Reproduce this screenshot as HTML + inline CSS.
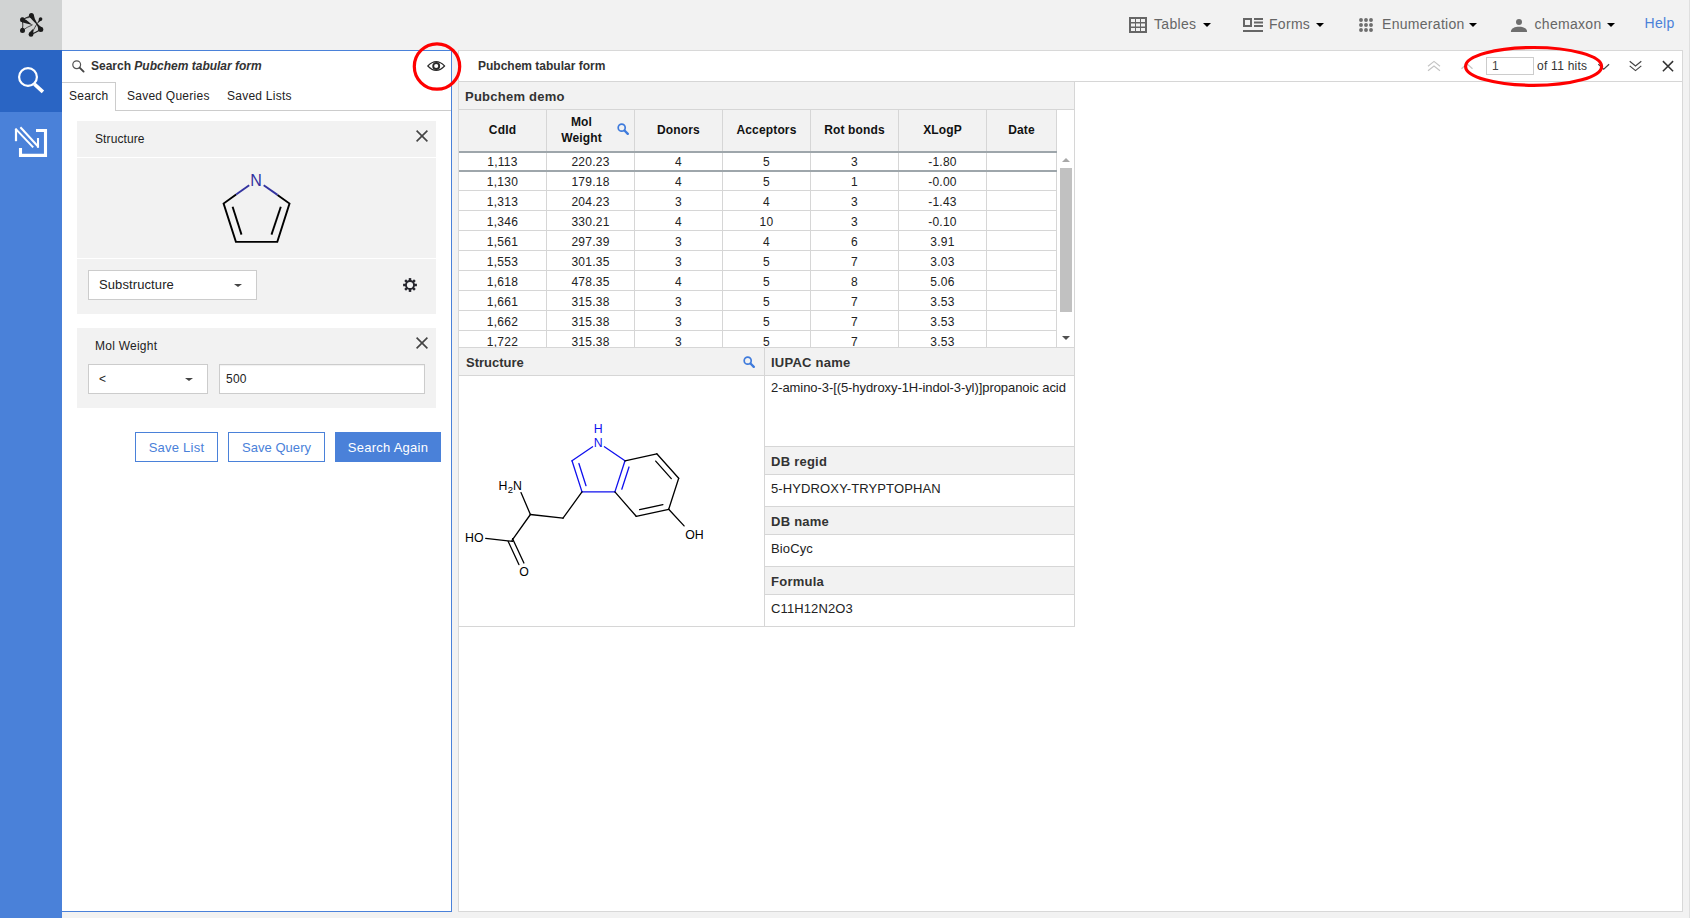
<!DOCTYPE html>
<html>
<head>
<meta charset="utf-8">
<title>Pubchem tabular form</title>
<style>
*{box-sizing:border-box;margin:0;padding:0}
html,body{width:1690px;height:918px;overflow:hidden;background:#f2f2f2;font-family:"Liberation Sans",sans-serif;font-size:12px;color:#222;letter-spacing:0.250px}
.abs{position:absolute}
#sidebar{position:absolute;left:0;top:0;width:62px;height:918px;background:#4a81d9}
#logo{position:absolute;left:0;top:0;width:62px;height:50px;background:#d1d3d3}
#sb-search{position:absolute;left:0;top:50px;width:62px;height:62px;background:#2a65c4}
/* top nav */
.nav{position:absolute;top:0;height:50px;font-size:14px;color:#666;line-height:16px;white-space:nowrap}
.nav span.t{position:absolute;top:16px;letter-spacing:0.300px}
.caret{position:absolute;width:0;height:0;border-left:4px solid transparent;border-right:4px solid transparent;border-top:4px solid #000}
/* left panel */
#lp{position:absolute;left:62px;top:50px;width:390px;height:862px;background:#fff;border:1px solid #4a81d9;border-left:none}
.card{position:absolute;background:#f2f2f2}
.sel{position:absolute;background:#fff;border:1px solid #ccc;font-size:13px;line-height:28px;padding-left:10px;color:#222}
.btn{position:absolute;top:432px;height:30px;border:1px solid #4a81d9;color:#4a81d9;background:#fff;font-size:13px;line-height:29px;text-align:center}
/* right panel */
#rp{position:absolute;left:458px;top:50px;width:1225px;height:862px;background:#fff;border:1px solid #d8d8d8}
.hd{position:absolute;background:#f2f2f2;font-weight:bold;font-size:13px;color:#333;line-height:27px;padding-left:6px;border-bottom:1px solid #d8d8d8}
.val{position:absolute;background:#fff;font-size:12px;color:#222;line-height:16px;padding:5px 0 0 6px;border-bottom:1px solid #d8d8d8}
table{border-collapse:collapse;position:absolute;table-layout:fixed}
td,th{border-right:1px solid #d8d8d8;text-align:center;font-size:12px;color:#222;padding:0;overflow:hidden}
th{background:#f2f2f2;font-weight:bold;color:#111;line-height:16px}
td{border-bottom:1px solid #d8d8d8;height:20px;line-height:19px}
.th{background:#f2f2f2;font-weight:bold;font-size:12px;color:#111;text-align:center;border-right:1px solid #d8d8d8}
.tc{background:#fff;font-size:12px;color:#222;text-align:center;border-right:1px solid #d8d8d8}
.lab{font-weight:bold;font-size:13px;color:#333;line-height:17px;white-space:nowrap}
.thx{letter-spacing:0.150px;font-weight:bold;font-size:12px;color:#111;line-height:16px;text-align:center;white-space:nowrap}
.tcx{font-size:12px;color:#222;line-height:16px;text-align:center;white-space:nowrap}
.vx{font-size:13px;color:#222;line-height:17px;white-space:nowrap;letter-spacing:0.120px}
</style>
</head>
<body>
<!-- top navigation -->
<div class="nav" style="left:0;width:1690px">
  <svg class="abs" style="left:1129px;top:17px" width="18" height="16" viewBox="0 0 18 16"><path fill="#666" fill-rule="evenodd" d="M0 0h18v16H0zM2 2v3h4V2zM7 2v3h4V2zM12 2v3h4V2zM2 6.5v3h4v-3zM7 6.5v3h4v-3zM12 6.5v3h4v-3zM2 11v3h4v-3zM7 11v3h4v-3zM12 11v3h4v-3z"/></svg>
  <span class="t" style="left:1154px">Tables</span><i class="caret" style="left:1203px;top:23px"></i>
  <svg class="abs" style="left:1243px;top:18px" width="20" height="14" viewBox="0 0 20 14"><path fill="#666" fill-rule="evenodd" d="M0 0h9v9H0zM2 2v5h5V2zM11 0h9v2h-9zM11 3.5h9v2h-9zM11 7h9v2h-9zM0 12h20v2H0z"/></svg>
  <span class="t" style="left:1269px">Forms</span><i class="caret" style="left:1316px;top:23px"></i>
  <svg class="abs" style="left:1358px;top:18px" width="16" height="15" viewBox="0 0 16 15"><g fill="#6e6e6e"><circle cx="3" cy="2" r="1.950"/><circle cx="8" cy="2" r="1.950"/><circle cx="13" cy="2" r="1.950"/><circle cx="3" cy="7" r="1.950"/><circle cx="8" cy="7" r="1.950"/><circle cx="13" cy="7" r="1.950"/><circle cx="3" cy="12" r="1.950"/><circle cx="8" cy="12" r="1.950"/><circle cx="13" cy="12" r="1.950"/></g></svg>
  <span class="t" style="left:1382px">Enumeration</span><i class="caret" style="left:1469px;top:23px"></i>
  <svg class="abs" style="left:1510px;top:18px" width="18" height="14" viewBox="0 0 18 14"><g fill="#6e6e6e"><circle cx="9" cy="3.900" r="3"/><path d="M0.900 13.900 C0.900 10 5 8.700 9 8.700 S17.100 10 17.100 13.900z"/></g></svg>
  <span class="t" style="left:1534.500px">chemaxon</span><i class="caret" style="left:1607px;top:23px"></i>
  <span class="t" style="left:1644.500px;top:15px;color:#4a81d9">Help</span>
</div>

<div class="abs" style="left:1689px;top:0;width:1px;height:918px;background:#dfdfdf"></div>
<!-- sidebar -->
<div id="sidebar">
  <div id="logo">
    <svg class="abs" style="left:14px;top:8px" width="36" height="34" viewBox="14 8 36 34">
      <g fill="#1c1c1c">
        <circle cx="31.400" cy="15.600" r="2.500"/><circle cx="40.600" cy="19" r="1.800"/><circle cx="40.800" cy="29.400" r="2.500"/>
        <circle cx="31" cy="34.400" r="2.400"/><circle cx="22.500" cy="30.400" r="2.500"/><circle cx="22.500" cy="19.800" r="2.500"/>
        <path d="M21.500 17.600 Q27 19.500 32.400 25 Q27.500 23.800 22 22.200z"/>
        <path d="M29 16.200 Q32 20 36.500 24.200 L37.300 23.500 Q34.500 19.500 33.800 15z"/>
        <path d="M36.500 24.200 Q38 26.500 38.500 30.600 L43 28 Q40 26.500 37.300 23.500z"/>
        <path d="M41.900 20.200 Q39 21.500 37.600 23.600 L38.300 22.600 Q38.600 20.500 39 18.200z"/>
        <path d="M28.700 33.800 Q30.500 31 33 29 L33.500 33.500z"/>
        <path d="M24.800 29.400 L22.400 27.400 L20.600 29 z"/>
        <path d="M29.200 17.300 L26 17.600 L24.500 18.600 L29.500 18 z"/>
      </g>
      <g fill="none" stroke="#1c1c1c" stroke-linecap="round">
        <path d="M22.500 19.800 Q23.200 25 22.500 30.400" stroke-width="0.900"/>
        <path d="M22.500 30.400 Q27 27 32.200 25" stroke-width="0.700"/>
        <path d="M22.500 19.800 Q26.500 17.200 31.400 15.600" stroke-width="0.900"/>
        <path d="M40.600 19 Q36.500 24 34.800 27.500 Q33 31 31 34.400" stroke-width="0.800"/>
        <path d="M40.800 29.400 Q36 32.200 31 34.400" stroke-width="1.100"/>
      </g>
    </svg>
  </div>
  <div id="sb-search">
    <svg class="abs" style="left:0;top:0" width="62" height="62" viewBox="0 50 62 62">
      <circle cx="28" cy="77" r="8.900" fill="none" stroke="#fff" stroke-width="2.200"/>
      <path d="M34.400 84.200 L42.900 91.800" stroke="#fff" stroke-width="3.600" fill="none"/>
    </svg>
  </div>
  <svg class="abs" style="left:0;top:112px" width="62" height="62" viewBox="0 112 62 62">
    <g fill="none" stroke="#fff">
      <path d="M16 141.200 V128.800" stroke-width="2.200"/>
      <path d="M15.400 128.600 L33.200 147.400" stroke-width="2"/>
      <path d="M20.400 127.300 L38.300 146.800" stroke-width="2"/>
      <path d="M38 138 V147.800" stroke-width="2.100"/>
      <path d="M36 130.500 H45.500 V155.400 H20.500 V148" stroke-width="3.100"/>
    </g>
  </svg>
</div>

<!-- left panel -->
<div id="lp">
  <!-- header -->
  <svg class="abs" style="left:10px;top:9px" width="13" height="13" viewBox="0 0 13 13"><circle cx="4.700" cy="4.700" r="3.900" fill="none" stroke="#555" stroke-width="1.200"/><path d="M7.600 7.600 L11.600 11.600" stroke="#444" stroke-width="1.900" stroke-linecap="round"/></svg>
  <div class="abs" style="left:29px;top:7px;font-size:12px;font-weight:bold;color:#333;line-height:16px;white-space:nowrap;letter-spacing:0">Search <i>Pubchem tabular form</i></div>
  <svg class="abs" style="left:365px;top:9px" width="19" height="12" viewBox="0 0 19 12"><path d="M0.800 6 Q9.200 -2.700 17.600 6 Q9.200 14.700 0.800 6z" fill="none" stroke="#2a2a2a" stroke-width="1.100" stroke-linejoin="miter"/><circle cx="9.200" cy="6" r="3" fill="none" stroke="#2a2a2a" stroke-width="1.900"/></svg>
  <!-- tabs -->
  <div class="abs" style="left:0;top:59px;width:389px;height:1px;background:#ccc"></div>
  <div class="abs" style="left:0;top:31px;width:54px;height:29px;background:#fff;border-top:1px solid #ccc;border-right:1px solid #ccc"></div>
  <div class="abs" style="left:7px;top:37px;line-height:16px;color:#222">Search</div>
  <div class="abs" style="left:65px;top:37px;line-height:16px;color:#222">Saved Queries</div>
  <div class="abs" style="left:165px;top:37px;line-height:16px;color:#222">Saved Lists</div>
  <!-- structure card -->
  <div class="card" style="left:15px;top:70px;width:359px;height:36px"></div>
  <div class="abs" style="left:33px;top:80px;line-height:16px;color:#222;letter-spacing:0.100px">Structure</div>
  <svg class="abs" style="left:353px;top:78px" width="14" height="14" viewBox="0 0 14 14"><path d="M1.600 1.600 L12.400 12.400 M12.400 1.600 L1.600 12.400" stroke="#444" stroke-width="1.600"/></svg>
  <div class="card" style="left:15px;top:107px;width:359px;height:100px"></div>
  <svg class="abs" style="left:140px;top:115px" width="100" height="85" viewBox="202 166 100 85">
    <g fill="none" stroke="#000" stroke-width="1.900" stroke-linecap="butt" stroke-linejoin="miter">
      <path d="M236.100 194.600 L223.600 203.600 L235.900 241.900 L277.300 241.900 L289.500 203.600 L277.500 194.900"/>
      <path d="M232.600 206.800 L241.500 234.600"/>
      <path d="M280.800 206.800 L271.500 234.600"/>
    </g>
    <g fill="none" stroke="#33339f" stroke-width="1.900">
      <path d="M249.200 185.300 L236.100 194.600"/>
      <path d="M263.700 185.300 L277.500 194.900"/>
    </g>
    <text x="256.100" y="185.800" font-family="Liberation Sans, sans-serif" font-size="16" fill="#33339f" text-anchor="middle" letter-spacing="0">N</text>
  </svg>
  <div class="card" style="left:15px;top:208px;width:359px;height:55px"></div>
  <div class="sel" style="left:26px;top:219px;width:169px;height:30px;letter-spacing:0.100px">Substructure<i class="caret" style="left:145px;top:13px;border-width:3.500px 4px 0 4px;border-top-color:#444"></i></div>
  <svg class="abs" style="left:340px;top:226px" width="16" height="16" viewBox="0 0 16 16"><g transform="translate(8 8)"><g fill="#26262e"><rect x="-1.250" y="-6.900" width="2.500" height="13.800"/><rect x="-1.250" y="-6.900" width="2.500" height="13.800" transform="rotate(45)"/><rect x="-1.250" y="-6.900" width="2.500" height="13.800" transform="rotate(90)"/><rect x="-1.250" y="-6.900" width="2.500" height="13.800" transform="rotate(135)"/><circle r="4.900"/></g><circle r="3.100" fill="#f2f2f2"/></g></svg>
  <!-- mol weight card -->
  <div class="card" style="left:15px;top:277px;width:359px;height:80px"></div>
  <div class="abs" style="left:33px;top:287px;line-height:16px;color:#222">Mol Weight</div>
  <svg class="abs" style="left:353px;top:285px" width="14" height="14" viewBox="0 0 14 14"><path d="M1.600 1.600 L12.400 12.400 M12.400 1.600 L1.600 12.400" stroke="#444" stroke-width="1.600"/></svg>
  <div class="sel" style="left:26px;top:313px;width:120px;height:30px;font-size:12px;line-height:29px">&lt;<i class="caret" style="left:96px;top:13px;border-width:3.500px 4px 0 4px;border-top-color:#444"></i></div>
  <div class="sel" style="left:157px;top:313px;width:206px;height:30px;font-size:12px;padding-left:6px;line-height:29px;box-shadow:inset 0 1px 1px rgba(0,0,0,.06)">500</div>
  <!-- buttons -->
  <div class="btn" style="left:73px;top:381px;width:83px">Save List</div>
  <div class="btn" style="left:166px;top:381px;width:97px;letter-spacing:0.050px">Save Query</div>
  <div class="btn" style="left:273px;top:381px;width:106px;background:#4a81d9;color:#fff">Search Again</div>
</div>

<!-- right panel -->
<!--RP-->
<div id="rp">
<div class="abs" style="left:19px;top:7px;font-size:12px;font-weight:bold;color:#333;line-height:16px;letter-spacing:0;white-space:nowrap">Pubchem tabular form</div>
<div class="abs" style="left:0;top:30px;width:1223px;height:1px;background:#d6d6d6"></div>
<svg class="abs" style="left:968px;top:9px" width="14" height="12" viewBox="0 0 14 12"><path d="M1 6.200 L7 1.400 L13 6.200 M1 10.800 L7 6 L13 10.800" fill="none" stroke="#c4c4c4" stroke-width="1.200"/></svg>
<svg class="abs" style="left:1002px;top:11px" width="14" height="8" viewBox="0 0 14 8"><path d="M0.500 6.700 L6 1.700 L11.500 6.700" fill="none" stroke="#c4c4c4" stroke-width="1.200"/></svg>
<div class="abs" style="left:1027px;top:6px;width:48px;height:18px;border:1px solid #ccc;background:#fff;font-size:12px;line-height:16px;padding-left:5px;color:#444">1</div>
<div class="abs" style="left:1078px;top:7px;font-size:12px;line-height:16px;color:#333;white-space:nowrap">of 11 hits</div>
<svg class="abs" style="left:1139px;top:11px" width="14" height="9" viewBox="0 0 14 9"><path d="M0.300 2.200 L5.700 7.200 L11.100 2.200" fill="none" stroke="#444" stroke-width="1.200"/></svg>
<svg class="abs" style="left:1170px;top:9px" width="14" height="12" viewBox="0 0 14 12"><path d="M0.700 1.300 L6.500 6 L12.300 1.300 M0.700 5.900 L6.500 10.600 L12.300 5.900" fill="none" stroke="#444" stroke-width="1.200"/></svg>
<svg class="abs" style="left:1203px;top:9px" width="13" height="13" viewBox="0 0 13 13"><path d="M0.900 1.100 L11.100 11.300 M11.100 1.100 L0.900 11.300" stroke="#333" stroke-width="1.500"/></svg>
<div class="abs" style="left:0;top:31px;width:616px;height:545px;border-right:1px solid #d6d6d6;border-bottom:1px solid #d6d6d6"></div>
<div class="abs" style="left:0;top:31px;width:615px;height:27px;background:#f2f2f2"></div>
<div class="abs" style="left:0;top:58px;width:615px;height:1px;background:#d6d6d6"></div>
<div class="abs lab" style="left:6px;top:37px">Pubchem demo</div>
<div class="abs" style="left:0;top:59px;width:598px;height:41px;background:#f2f2f2"></div>
<div class="abs thx" style="left:0px;top:71px;width:87px">CdId</div>
<div class="abs thx" style="left:88px;top:63px;width:69px">Mol<br>Weight</div>
<div class="abs thx" style="left:176px;top:71px;width:87px">Donors</div>
<div class="abs thx" style="left:264px;top:71px;width:87px">Acceptors</div>
<div class="abs thx" style="left:352px;top:71px;width:87px">Rot bonds</div>
<div class="abs thx" style="left:440px;top:71px;width:87px">XLogP</div>
<div class="abs thx" style="left:528px;top:71px;width:69px">Date</div>
<svg class="abs" style="left:158px;top:72px" width="13" height="13" viewBox="0 0 13 13"><circle cx="4.700" cy="4.700" r="3.500" fill="none" stroke="#3f7bdc" stroke-width="1.700"/><path d="M7.500 7.500 L10.800 10.800" stroke="#3f7bdc" stroke-width="2.400" stroke-linecap="round"/></svg>
<div class="abs" style="left:0;top:100px;width:598px;height:196px;background:#fff;overflow:hidden">
<div class="abs tcx" style="left:0px;top:3px;width:87px">1,113</div>
<div class="abs tcx" style="left:88px;top:3px;width:87px">220.23</div>
<div class="abs tcx" style="left:176px;top:3px;width:87px">4</div>
<div class="abs tcx" style="left:264px;top:3px;width:87px">5</div>
<div class="abs tcx" style="left:352px;top:3px;width:87px">3</div>
<div class="abs tcx" style="left:440px;top:3px;width:87px">-1.80</div>
<div class="abs tcx" style="left:0px;top:23px;width:87px">1,130</div>
<div class="abs tcx" style="left:88px;top:23px;width:87px">179.18</div>
<div class="abs tcx" style="left:176px;top:23px;width:87px">4</div>
<div class="abs tcx" style="left:264px;top:23px;width:87px">5</div>
<div class="abs tcx" style="left:352px;top:23px;width:87px">1</div>
<div class="abs tcx" style="left:440px;top:23px;width:87px">-0.00</div>
<div class="abs tcx" style="left:0px;top:43px;width:87px">1,313</div>
<div class="abs tcx" style="left:88px;top:43px;width:87px">204.23</div>
<div class="abs tcx" style="left:176px;top:43px;width:87px">3</div>
<div class="abs tcx" style="left:264px;top:43px;width:87px">4</div>
<div class="abs tcx" style="left:352px;top:43px;width:87px">3</div>
<div class="abs tcx" style="left:440px;top:43px;width:87px">-1.43</div>
<div class="abs tcx" style="left:0px;top:63px;width:87px">1,346</div>
<div class="abs tcx" style="left:88px;top:63px;width:87px">330.21</div>
<div class="abs tcx" style="left:176px;top:63px;width:87px">4</div>
<div class="abs tcx" style="left:264px;top:63px;width:87px">10</div>
<div class="abs tcx" style="left:352px;top:63px;width:87px">3</div>
<div class="abs tcx" style="left:440px;top:63px;width:87px">-0.10</div>
<div class="abs tcx" style="left:0px;top:83px;width:87px">1,561</div>
<div class="abs tcx" style="left:88px;top:83px;width:87px">297.39</div>
<div class="abs tcx" style="left:176px;top:83px;width:87px">3</div>
<div class="abs tcx" style="left:264px;top:83px;width:87px">4</div>
<div class="abs tcx" style="left:352px;top:83px;width:87px">6</div>
<div class="abs tcx" style="left:440px;top:83px;width:87px">3.91</div>
<div class="abs tcx" style="left:0px;top:103px;width:87px">1,553</div>
<div class="abs tcx" style="left:88px;top:103px;width:87px">301.35</div>
<div class="abs tcx" style="left:176px;top:103px;width:87px">3</div>
<div class="abs tcx" style="left:264px;top:103px;width:87px">5</div>
<div class="abs tcx" style="left:352px;top:103px;width:87px">7</div>
<div class="abs tcx" style="left:440px;top:103px;width:87px">3.03</div>
<div class="abs tcx" style="left:0px;top:123px;width:87px">1,618</div>
<div class="abs tcx" style="left:88px;top:123px;width:87px">478.35</div>
<div class="abs tcx" style="left:176px;top:123px;width:87px">4</div>
<div class="abs tcx" style="left:264px;top:123px;width:87px">5</div>
<div class="abs tcx" style="left:352px;top:123px;width:87px">8</div>
<div class="abs tcx" style="left:440px;top:123px;width:87px">5.06</div>
<div class="abs tcx" style="left:0px;top:143px;width:87px">1,661</div>
<div class="abs tcx" style="left:88px;top:143px;width:87px">315.38</div>
<div class="abs tcx" style="left:176px;top:143px;width:87px">3</div>
<div class="abs tcx" style="left:264px;top:143px;width:87px">5</div>
<div class="abs tcx" style="left:352px;top:143px;width:87px">7</div>
<div class="abs tcx" style="left:440px;top:143px;width:87px">3.53</div>
<div class="abs tcx" style="left:0px;top:163px;width:87px">1,662</div>
<div class="abs tcx" style="left:88px;top:163px;width:87px">315.38</div>
<div class="abs tcx" style="left:176px;top:163px;width:87px">3</div>
<div class="abs tcx" style="left:264px;top:163px;width:87px">5</div>
<div class="abs tcx" style="left:352px;top:163px;width:87px">7</div>
<div class="abs tcx" style="left:440px;top:163px;width:87px">3.53</div>
<div class="abs tcx" style="left:0px;top:183px;width:87px">1,722</div>
<div class="abs tcx" style="left:88px;top:183px;width:87px">315.38</div>
<div class="abs tcx" style="left:176px;top:183px;width:87px">3</div>
<div class="abs tcx" style="left:264px;top:183px;width:87px">5</div>
<div class="abs tcx" style="left:352px;top:183px;width:87px">7</div>
<div class="abs tcx" style="left:440px;top:183px;width:87px">3.53</div>
<div class="abs" style="left:0;top:39px;width:598px;height:1px;background:#d6d6d6"></div>
<div class="abs" style="left:0;top:59px;width:598px;height:1px;background:#d6d6d6"></div>
<div class="abs" style="left:0;top:79px;width:598px;height:1px;background:#d6d6d6"></div>
<div class="abs" style="left:0;top:99px;width:598px;height:1px;background:#d6d6d6"></div>
<div class="abs" style="left:0;top:119px;width:598px;height:1px;background:#d6d6d6"></div>
<div class="abs" style="left:0;top:139px;width:598px;height:1px;background:#d6d6d6"></div>
<div class="abs" style="left:0;top:159px;width:598px;height:1px;background:#d6d6d6"></div>
<div class="abs" style="left:0;top:179px;width:598px;height:1px;background:#d6d6d6"></div>
</div>
<div class="abs" style="left:87px;top:59px;width:1px;height:237px;background:#d6d6d6"></div>
<div class="abs" style="left:175px;top:59px;width:1px;height:237px;background:#d6d6d6"></div>
<div class="abs" style="left:263px;top:59px;width:1px;height:237px;background:#d6d6d6"></div>
<div class="abs" style="left:351px;top:59px;width:1px;height:237px;background:#d6d6d6"></div>
<div class="abs" style="left:439px;top:59px;width:1px;height:237px;background:#d6d6d6"></div>
<div class="abs" style="left:527px;top:59px;width:1px;height:237px;background:#d6d6d6"></div>
<div class="abs" style="left:597px;top:59px;width:1px;height:237px;background:#d6d6d6"></div>
<div class="abs" style="left:0;top:100px;width:598px;height:2px;background:#9ea6ab"></div>
<div class="abs" style="left:0;top:119px;width:598px;height:2px;background:#9ea6ab"></div>
<div class="abs" style="left:598px;top:59px;width:17px;height:237px;background:#fff"></div>
<div class="abs" style="left:601px;top:117px;width:12px;height:144px;background:#c1c1c1"></div>
<i class="caret" style="left:603px;top:107px;border-width:0 4px 4px 4px;border-top-color:transparent;border-bottom:4px solid #a8a8a8"></i>
<i class="caret" style="left:603px;top:285px;border-width:4px 4px 0 4px;border-top-color:#505050"></i>
<div class="abs" style="left:0;top:296px;width:615px;height:1px;background:#d6d6d6"></div>
<div class="abs" style="left:0px;top:297px;width:305px;height:27px;background:#f2f2f2"></div>
<div class="abs" style="left:0px;top:324px;width:305px;height:1px;background:#d6d6d6"></div>
<div class="abs lab" style="left:7px;top:303px;letter-spacing:0">Structure</div>
<svg class="abs" style="left:284px;top:305px" width="13" height="13" viewBox="0 0 13 13"><circle cx="4.700" cy="4.700" r="3.500" fill="none" stroke="#3f7bdc" stroke-width="1.700"/><path d="M7.500 7.500 L10.800 10.800" stroke="#3f7bdc" stroke-width="2.400" stroke-linecap="round"/></svg>
<div class="abs" style="left:305px;top:297px;width:1px;height:279px;background:#d6d6d6"></div>
<div class="abs" style="left:306px;top:297px;width:309px;height:27px;background:#f2f2f2"></div>
<div class="abs" style="left:306px;top:324px;width:309px;height:1px;background:#d6d6d6"></div>
<div class="abs lab" style="left:312px;top:303px">IUPAC name</div>
<div class="abs" style="left:306px;top:395px;width:309px;height:1px;background:#d6d6d6"></div>
<div class="abs vx" style="left:312px;top:328px;letter-spacing:-0.070px">2-amino-3-[(5-hydroxy-1H-indol-3-yl)]propanoic acid</div>
<div class="abs" style="left:306px;top:396px;width:309px;height:27px;background:#f2f2f2"></div>
<div class="abs" style="left:306px;top:423px;width:309px;height:1px;background:#d6d6d6"></div>
<div class="abs lab" style="left:312px;top:402px">DB regid</div>
<div class="abs" style="left:306px;top:455px;width:309px;height:1px;background:#d6d6d6"></div>
<div class="abs vx" style="left:312px;top:429px;">5-HYDROXY-TRYPTOPHAN</div>
<div class="abs" style="left:306px;top:456px;width:309px;height:27px;background:#f2f2f2"></div>
<div class="abs" style="left:306px;top:483px;width:309px;height:1px;background:#d6d6d6"></div>
<div class="abs lab" style="left:312px;top:462px">DB name</div>
<div class="abs" style="left:306px;top:515px;width:309px;height:1px;background:#d6d6d6"></div>
<div class="abs vx" style="left:312px;top:489px;">BioCyc</div>
<div class="abs" style="left:306px;top:516px;width:309px;height:27px;background:#f2f2f2"></div>
<div class="abs" style="left:306px;top:543px;width:309px;height:1px;background:#d6d6d6"></div>
<div class="abs lab" style="left:312px;top:522px">Formula</div>
<div class="abs" style="left:306px;top:575px;width:309px;height:1px;background:#d6d6d6"></div>
<div class="abs vx" style="left:312px;top:549px;">C11H12N2O3</div>
<svg class="abs" style="left:1px;top:326px" width="303" height="248" viewBox="460 377 303 248">
<g fill="none" stroke="#1010ee" stroke-width="1.300" stroke-linecap="round"><path d="M592.6 446.8 L572.0 460.8"/><path d="M604.4 446.8 L625.0 460.8"/><path d="M572.0 460.8 L582.0 491.9"/><path d="M582.0 491.9 L614.9 491.9"/><path d="M614.9 491.9 L625.0 460.8"/><path d="M578.9 463.5 L586.0 485.7"/><path d="M621.8 489.2 L629.0 467.0"/></g>
<g fill="none" stroke="#000" stroke-width="1.300" stroke-linecap="round"><path d="M625.0 460.8 L656.8 453.8"/><path d="M656.8 453.8 L678.7 478.3"/><path d="M678.7 478.3 L668.7 509.3"/><path d="M668.7 509.3 L636.2 516.3"/><path d="M636.2 516.3 L614.9 491.9"/><path d="M582.0 491.9 L563.0 518.2"/><path d="M563.0 518.2 L530.4 514.5"/><path d="M530.4 514.5 L512.0 540.4"/><path d="M655.7 461.1 L671.3 478.6"/><path d="M662.9 504.7 L639.6 509.7"/><path d="M668.7 509.3 L684.1 525.9"/><path d="M530.4 514.5 L521.0 492.6"/><path d="M512.6 541.4 L485.7 538.3"/><path d="M512.6 538.7 L523.9 563.0"/><path d="M508.2 541.4 L518.9 564.6"/></g>
<g font-family="Liberation Sans, sans-serif" font-size="12.300" letter-spacing="0" fill="#1010ee" text-anchor="middle"><text x="598.200" y="433.400">H</text><text x="598.200" y="446.600">N</text></g>
<g font-family="Liberation Sans, sans-serif" font-size="12.300" letter-spacing="0" fill="#000"><text x="498.400" y="489.900">H</text><text x="507.800" y="493.200" font-size="9.500">2</text><text x="512.900" y="489.900">N</text><text x="465" y="542.400">HO</text><text x="685.300" y="538.900">OH</text><text x="519.300" y="575.700">O</text></g>
</svg>
</div>
<!--/RP-->
<svg class="abs" style="left:0;top:0;pointer-events:none" width="1690" height="120" viewBox="0 0 1690 120">
<circle cx="437" cy="66.500" r="22.700" fill="none" stroke="#fe0000" stroke-width="3.200"/>
<ellipse cx="1533.600" cy="66.400" rx="68" ry="18.900" fill="none" stroke="#fe0000" stroke-width="3.200"/>
</svg>
</body>
</html>
